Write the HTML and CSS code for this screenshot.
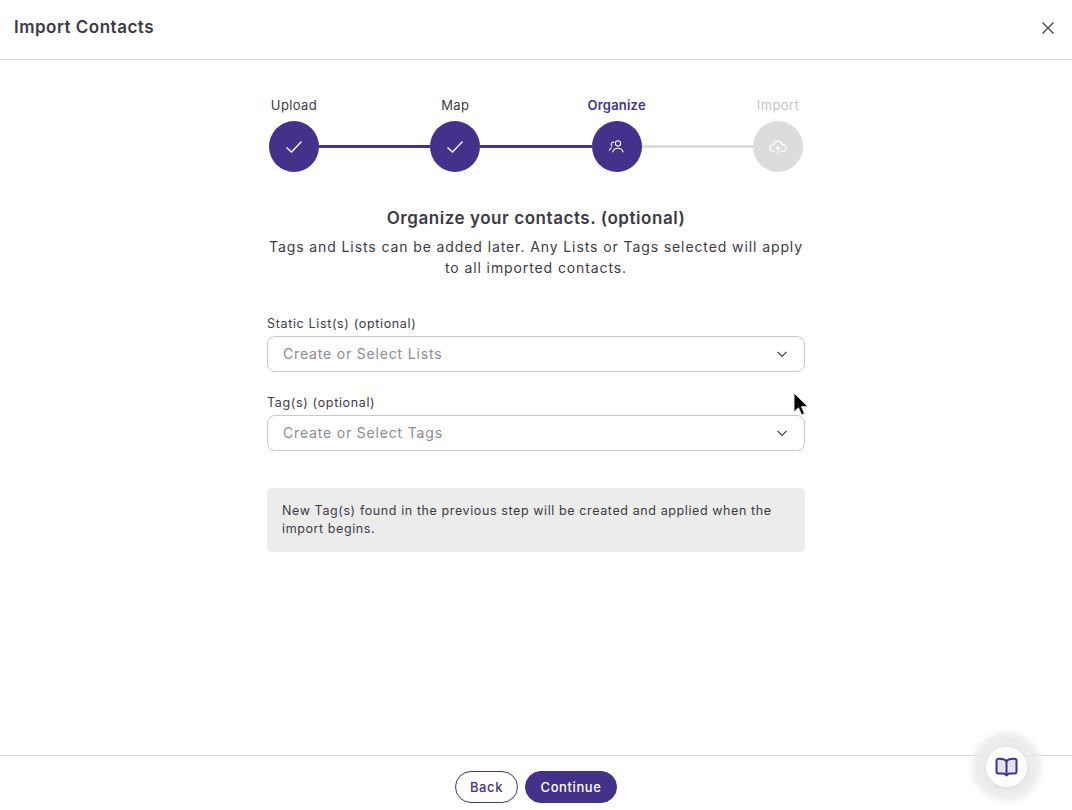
FILE: index.html
```html
<!DOCTYPE html>
<html lang="en">
<head>
  <meta charset="UTF-8">
  <title>Import Contacts</title>
  <link rel="stylesheet" href="styles.css">
</head>
<body>
  <header class="top-bar">
    <h1>Import Contacts</h1>
    <button class="close-btn" aria-label="Close">
      <svg width="14" height="14" viewBox="0 0 14 14"><path d="M1.500 1.500l11 11M12.500 1.500l-11 11" stroke="#55535c" stroke-width="1.500" fill="none"/></svg>
    </button>
  </header>

  <main class="content">
    <div class="stepper">
      <div class="step">
        <span class="step-label">Upload</span>
        <span class="step-dot">
          <svg width="18" height="14" viewBox="0 0 18 14"><path d="M1.500 7.500l5 4.500 10-10.500" stroke="#fff" stroke-width="1.300" fill="none"/></svg>
        </span>
      </div>
      <div class="step-line"></div>
      <div class="step">
        <span class="step-label">Map</span>
        <span class="step-dot">
          <svg width="18" height="14" viewBox="0 0 18 14"><path d="M1.500 7.500l5 4.500 10-10.500" stroke="#fff" stroke-width="1.300" fill="none"/></svg>
        </span>
      </div>
      <div class="step-line"></div>
      <div class="step current">
        <span class="step-label">Organize</span>
        <span class="step-dot">
          <svg width="18" height="14" viewBox="0 0 18 14" fill="none" stroke="#fff" stroke-width="1.100"><circle cx="10" cy="3.400" r="2.600"/><path d="M4.600 12.400c.6-2.800 2.600-4.200 5.200-4.200s4.800 1.400 5.400 4.200"/><path d="M6.200 2.200c-1.800-.4-3 .8-3 2.200 0 .8.400 1.400 1 1.800M3.700 7.400c-1.300.6-2.200 1.800-2.500 3.200"/></svg>
        </span>
      </div>
      <div class="step-line todo"></div>
      <div class="step todo">
        <span class="step-label">Import</span>
        <span class="step-dot">
          <svg width="18" height="14" viewBox="0 0 18 14" fill="none" stroke="#fff" stroke-width="1.200"><path d="M6 11.500H4.500a3.300 3.300 0 0 1-.4-6.600 4.800 4.800 0 0 1 9.200-.6 3.600 3.600 0 0 1 .2 7.200H12"/><path d="M9 13.500V7M6.600 9.200L9 6.800l2.400 2.400"/></svg>
        </span>
      </div>
    </div>

    <h2 class="lead-title">Organize your contacts. (optional)</h2>
    <p class="lead-text">Tags and Lists can be added later. Any Lists or Tags selected will apply to all imported contacts.</p>

    <div class="field first">
      <label>Static List(s) (optional)</label>
      <div class="select">
        <span>Create or Select Lists</span>
        <svg width="12" height="8" viewBox="0 0 12 8"><path d="M1.500 1.800L6 6.300l4.500-4.500" stroke="#3c3a44" stroke-width="1.200" fill="none"/></svg>
      </div>
    </div>

    <div class="field">
      <label>Tag(s) (optional)</label>
      <div class="select">
        <span>Create or Select Tags</span>
        <svg width="12" height="8" viewBox="0 0 12 8"><path d="M1.500 1.800L6 6.300l4.500-4.500" stroke="#3c3a44" stroke-width="1.200" fill="none"/></svg>
      </div>
    </div>

    <div class="note">New Tag(s) found in the previous step will be created and applied when the import begins.</div>
  </main>

  <footer class="bottom-bar">
    <button class="btn btn-outline">Back</button>
    <button class="btn btn-solid">Continue</button>
  </footer>

  <button class="help-btn" aria-label="Guide">
    <svg width="23" height="21" viewBox="0 0 23 21" fill="none" stroke="#43318a" stroke-width="2" stroke-linejoin="round"><path d="M11.500 4C10 2.400 7.500 1.800 5 1.800H3.500A2 2 0 0 0 1.500 3.800v10.700a2 2 0 0 0 2 2H8c1.500 0 2.500.5 3.500 2 1-1.500 2-2 3.500-2h4.500a2 2 0 0 0 2-2V3.800a2 2 0 0 0-2-2H18c-2.500 0-5 .6-6.500 2.200z" fill="#e6e3f1"/><path d="M11.500 4v14"/></svg>
  </button>

  <svg class="cursor" width="18" height="26" viewBox="0 0 18 26"><path d="M2 1v19l4.500-4.200 3 7 3-1.300-3-6.800H16z" fill="#000" stroke="#e4e4e4" stroke-width="1"/></svg>
</body>
</html>
```

FILE: styles.css
```css
* {
  box-sizing: border-box;
}

html, body {
  margin: 0;
  height: 100%;
}

body {
  display: flex;
  flex-direction: column;
  height: 810px;
  overflow: hidden;
  position: relative;
  background: #fff;
  color: #3c3a44;
  font-family: "Inter", "Liberation Sans", sans-serif;
}

.top-bar {
  height: 60px;
  flex: none;
  display: flex;
  align-items: center;
  justify-content: space-between;
  padding: 0 17px 5px 14px;
  border-bottom: 1px solid #cfcfcf;
}

.top-bar h1 {
  margin: 0;
  font-size: 17px;
  font-weight: 600;
  letter-spacing: 0.5px;
  color: #3c3a44;
}

.close-btn {
  display: flex;
  padding: 0;
  border: 0;
  background: none;
  margin-top: 1px;
}

.content {
  flex: 1;
  width: 538px;
  margin: 0 auto;
  padding-top: 37px;
  display: flex;
  flex-direction: column;
}

.stepper {
  display: flex;
  align-items: flex-end;
  padding: 0 2px;
}

.step {
  width: 50px;
  flex: none;
  display: flex;
  flex-direction: column;
  align-items: center;
  gap: 7px;
}

.step-label {
  font-size: 13px;
  line-height: 17px;
  white-space: nowrap;
  letter-spacing: 0.4px;
}

.step-dot {
  width: 50px;
  height: 51px;
  border-radius: 50%;
  background: #43318a;
  display: flex;
  align-items: center;
  justify-content: center;
}

.step-line {
  flex: 1;
  height: 3px;
  margin-bottom: 24px;
  background: #43318a;
}

.step-line.todo {
  background: #dcdcdc;
}

.step.current .step-label {
  color: #43318a;
  font-weight: 600;
  letter-spacing: 0.2px;
}

.step.todo .step-label {
  color: #c4c4c4;
}

.step.todo .step-dot {
  background: #dcdcdc;
}

.lead-title {
  margin: 35px 0 0;
  font-size: 17px;
  line-height: 22px;
  font-weight: 600;
  letter-spacing: 0.55px;
  text-align: center;
}

.lead-text {
  margin: 7px 0 0;
  font-size: 14px;
  line-height: 21px;
  letter-spacing: 0.9px;
  text-align: center;
}

.field {
  margin-top: 22px;
}

.field.first {
  margin-top: 37px;
}

.field label {
  display: block;
  font-size: 12.5px;
  line-height: 17px;
  letter-spacing: 0.65px;
  margin-bottom: 4px;
}

.select {
  height: 36px;
  border: 1px solid #c9c9c9;
  border-radius: 8px;
  display: flex;
  align-items: center;
  justify-content: space-between;
  padding: 0 16px 0 15px;
  font-size: 14px;
  letter-spacing: 0.82px;
  color: #8c8b91;
}

.select span {
  margin-top: -2px;
}

.note {
  margin-top: 37px;
  height: 64px;
  padding: 14px 15px 0;
  background: #ececec;
  border-radius: 5px;
  font-size: 12.5px;
  line-height: 18px;
  letter-spacing: 0.6px;
}

.bottom-bar {
  height: 55px;
  flex: none;
  border-top: 1px solid #cfcfcf;
  padding-top: 15px;
  display: flex;
  justify-content: center;
  align-items: flex-start;
  gap: 7px;
}

.btn {
  height: 32px;
  border-radius: 16px;
  font-family: inherit;
  font-size: 13px;
  font-weight: 500;
  letter-spacing: 0.6px;
  border: 1px solid #43318a;
  cursor: pointer;
}

.btn-outline {
  width: 63px;
  background: #fff;
  color: #43318a;
}

.btn-solid {
  width: 92px;
  background: #43318a;
  color: #fff;
}

.help-btn {
  position: absolute;
  left: 986px;
  top: 747px;
  width: 41px;
  height: 40px;
  padding: 0;
  border: 0;
  border-radius: 50%;
  background: #fff;
  display: flex;
  align-items: center;
  justify-content: center;
  box-shadow: 0 1px 4px rgba(0, 0, 0, 0.08), 0 0 5px 12px rgba(232, 232, 232, 0.75), 0 0 4px 16px rgba(240, 240, 240, 0.6);
}

.cursor {
  position: absolute;
  left: 792px;
  top: 392px;
}
```
